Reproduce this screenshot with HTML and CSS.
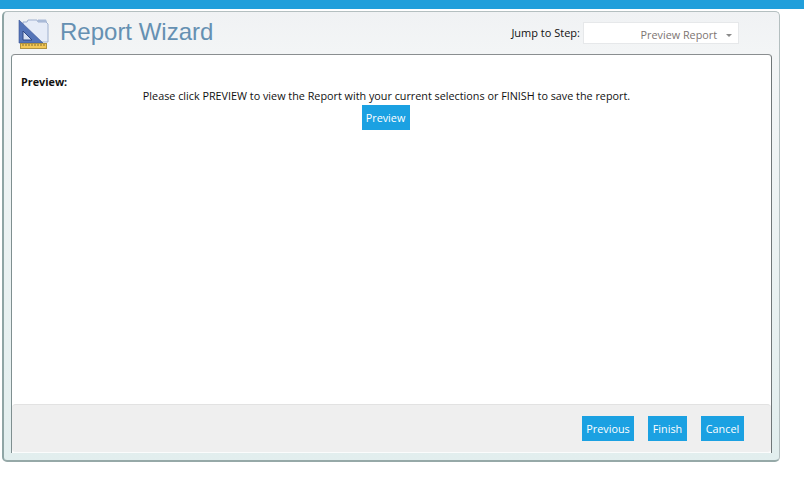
FILE: index.html

```html
<!DOCTYPE html>
<html lang="en">
  <head>
    <meta charset="UTF-8" />
    <title>Report Wizard</title>
    <link rel="stylesheet" href="styles.css">
  </head>

  <body>
    <div class="topbar"></div>
    <div class="wizard">
      <div class="header">
        <svg class="logo" width="32" height="33" viewBox="0 0 32 33">
          <path d="M5 5h4l1-2h9l1 2h8l2 2v18H5z" fill="#e6ecf8" stroke="#9fb0cf" />
          <path d="M20 2.500h8l1 2.500h-9z" fill="#a9bad7" />
          <path d="M1 3l24 23H1z" fill="#5474b8" stroke="#3a5696" stroke-width="0.6" />
          <path d="M5 14l9 9H5z" fill="#d5dff2" stroke="#2c4684" />
          <rect x="2.500" y="26.500" width="26" height="5" fill="#f3c757" stroke="#b0923f" />
          <path d="M5 27v2M8 27v2M11 27v2M14 27v2M17 27v2M20 27v2M23 27v2M26 27v2" stroke="#85712f" />
        </svg>
        <div class="title">Report Wizard</div>
        <div class="jump">
          <span class="jump-label">Jump to Step:</span>
          <div class="select">
            <span>Preview Report</span>
            <i class="caret"></i>
          </div>
        </div>
      </div>

      <div class="panel">
        <div class="content">
          <div class="section-title">Preview:</div>
          <div class="message">Please click PREVIEW to view the Report with your current selections or FINISH to save the report.</div>
          <div class="preview-row"><button class="btn btn-preview">Preview</button></div>
        </div>
        <div class="footer">
          <button class="btn btn-previous">Previous</button>
          <button class="btn btn-finish">Finish</button>
          <button class="btn btn-cancel">Cancel</button>
        </div>
      </div>
    </div>
  </body>
</html>
```

FILE: styles.css

```css
html,
body {
  margin: 0;
  padding: 0;
  height: 100%;
  background-color: #fff;
  font-family: "Open Sans", "Noto Sans", sans-serif;
  font-size: 10.8px;
  color: #111;
  overflow: hidden;
}

.topbar {
  height: 9px;
  background-color: #219fdb;
}

.wizard {
  box-sizing: border-box;
  width: 778px;
  height: 451px;
  margin: 2px 0 0 2px;
  padding: 0 7px 7px 7px;
  display: flex;
  flex-direction: column;
  border: 1px solid #b4bfc0;
  border-left: 2px solid #8fa5a5;
  border-bottom: 2px solid #96a9a8;
  border-radius: 5px;
  background: linear-gradient(#f0f2f4, #f3f5f6 40px, #e2eeee);
}

.header {
  height: 42px;
  flex: none;
  display: flex;
  align-items: center;
}

.logo {
  margin: 1px 0 0 7px;
}

.title {
  margin: 0 0 2px 10px;
  font-family: "Liberation Sans", Arial, sans-serif;
  font-size: 24px;
  color: #6590b2;
}

.jump {
  margin-left: auto;
  margin-right: 33px;
  display: flex;
  align-items: center;
}

.jump-label {
  margin: 0 3px 2px 0;
  font-size: 11px;
}

.select {
  box-sizing: border-box;
  width: 156px;
  height: 22px;
  padding: 2px 6px 0 0;
  display: flex;
  align-items: center;
  justify-content: flex-end;
  background-color: #fff;
  border: 1px solid #e6e8ea;
  color: #7d7572;
}

.caret {
  margin: 2px 0 0 9px;
  border-left: 3px solid transparent;
  border-right: 3px solid transparent;
  border-top: 3px solid #8a8a8a;
}

.panel {
  flex: 1;
  display: flex;
  flex-direction: column;
  background-color: #fff;
  border: 1px solid #6f7678;
  border-bottom: 0;
  border-left-color: #7f8f90;
  border-top-color: #8a8e90;
  border-radius: 4px 4px 0 0;
}

.content {
  flex: 1;
  padding: 19px 9px 0;
}

.section-title {
  font-weight: 700;
}

.message {
  margin-top: -1px;
  text-align: center;
  padding-right: 10px;
  line-height: 15px;
}

.preview-row {
  margin-top: 2px;
  display: flex;
  justify-content: center;
  padding-right: 12px;
}

.btn {
  height: 25px;
  padding: 0;
  border: 0;
  background-color: #1ba1e2;
  color: #fff;
  font-family: inherit;
  font-size: 10.8px;
}

.btn-preview {
  width: 48px;
}

.btn-previous {
  width: 52px;
}

.btn-finish {
  width: 39px;
}

.btn-cancel {
  width: 43px;
}

.footer {
  height: 49px;
  flex: none;
  box-sizing: border-box;
  padding: 0 27px 0 0;
  display: flex;
  align-items: center;
  justify-content: flex-end;
  gap: 14px;
  background-color: #efefef;
  border-top: 1px solid #e2e2e2;
  border-bottom: 1px solid #fbfcfc;
  border-radius: 4px;
}
```
